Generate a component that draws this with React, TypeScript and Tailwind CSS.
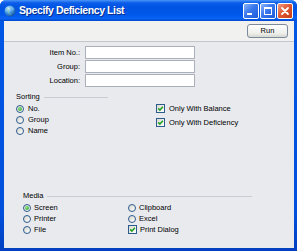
import React from 'react';

// XP-style radio button
function Radio({ checked, label, gap = 'gap-[4px]' }: { checked?: boolean; label: string; gap?: string }) {
  return (
    <div className={`flex h-[11px] items-center ${gap}`}>
      <span className="flex h-[8px] w-[8px] items-center justify-center rounded-full border border-[#2c5b8e] bg-[linear-gradient(135deg,#d6d6ce,#ffffff)]">
        {checked && <span className="h-[4px] w-[4px] rounded-full bg-[radial-gradient(circle_at_35%_35%,#8ee68e,#1c9a1c)]" />}
      </span>
      <span className="leading-[11px]">{label}</span>
    </div>
  );
}

// XP-style checkbox (always ticked here)
function Check({ label, gap = 'gap-[4px]' }: { label: string; gap?: string }) {
  return (
    <div className={`flex items-center ${gap}`}>
      <span className="flex h-[9px] w-[9px] items-center justify-center border border-[#2c5b8e] bg-[linear-gradient(135deg,#d9d9d1,#ffffff)]">
        <svg viewBox="0 0 7 7" className="h-[7px] w-[7px]">
          <path d="M1.2 3.4 L2.9 5.1 L5.9 1.8" stroke="#21a121" strokeWidth="1.5" fill="none" />
        </svg>
      </span>
      <span className="leading-[9px]">{label}</span>
    </div>
  );
}

function Field({ label }: { label: string }) {
  return (
    <div className="flex h-[13px] items-center">
      <span className="w-[77px] pr-[1px] text-right">{label}</span>
      <div className="ml-[4px] h-[13px] w-[110px] border border-[#a9b0ba] bg-white" />
    </div>
  );
}

function GroupHeader({ title, line }: { title: string; line: string }) {
  return (
    <div className="flex h-[8px] items-center gap-[4px] leading-[8px]">
      <span>{title}</span>
      <span className={`h-[1px] ${line} bg-[#c9ccd3]`} />
    </div>
  );
}

function Globe() {
  return (
    <svg viewBox="0 0 12 12" className="h-[12px] w-[12px] shrink-0">
      <defs>
        <radialGradient id="g" cx="35%" cy="30%" r="75%">
          <stop offset="0%" stopColor="#d8f2ff" />
          <stop offset="45%" stopColor="#4fa3e8" />
          <stop offset="100%" stopColor="#134e9c" />
        </radialGradient>
      </defs>
      <circle cx="6" cy="6" r="5.5" fill="url(#g)" />
      <path d="M2.2 4.2 C3.5 3.2 5 4.6 4.4 6 C3.9 7.2 5.2 8.3 6.4 9.6" stroke="#8fd0a8" strokeWidth="1" fill="none" opacity="0.8" />
      <path d="M7.2 2.2 C8.6 3 9.8 4.4 8.4 5.4" stroke="#a8e0ff" strokeWidth="0.9" fill="none" opacity="0.8" />
    </svg>
  );
}

function TitleButton({ kind }: { kind: 'min' | 'max' | 'close' }) {
  const base =
    kind === 'close'
      ? 'bg-[linear-gradient(135deg,#f0a080,#e05a35_45%,#c83c16)]'
      : 'bg-[linear-gradient(135deg,#8cb4fa,#3a78ee_45%,#1f5ad8)]';
  return (
    <div className={`relative h-[16px] w-[16px] rounded-[2px] border border-white ${base}`}>
      {kind === 'min' && <span className="absolute bottom-[3px] left-[3px] h-[2px] w-[5px] bg-white" />}
      {kind === 'max' && (
        <span className="absolute left-[3px] top-[3px] h-[8px] w-[8px] border border-t-2 border-white" />
      )}
      {kind === 'close' && (
        <svg viewBox="0 0 14 14" className="absolute inset-0 h-[14px] w-[14px]">
          <path d="M4 4 L10 10 M10 4 L4 10" stroke="white" strokeWidth="1.8" strokeLinecap="round" />
        </svg>
      )}
    </div>
  );
}

export default function App() {
  return (
    <div className="h-[251px] w-[297px] bg-white font-['Liberation_Sans',Arial,sans-serif] text-[7.5px] text-black">
      <div className="flex h-full flex-col overflow-hidden rounded-t-[6px] bg-[linear-gradient(to_bottom,#0058e6,#0050dc_85%,#003fc0)]">
        {/* Title bar */}
        <div className="flex h-[21px] shrink-0 items-center bg-[linear-gradient(to_bottom,#4a95f8_0%,#0a5ce9_14%,#0054e3_35%,#0058ea_70%,#0a63f4_88%,#0048cc_100%)] pl-[4px] pr-[4px]">
          <Globe />
          <span className="ml-[3px] text-[10.5px] font-bold tracking-[-0.4px] text-white [text-shadow:1px_1px_0_#0a2f8a]">
            Specify Deficiency List
          </span>
          <div className="ml-auto flex gap-[1px]">
            <TitleButton kind="min" />
            <TitleButton kind="max" />
            <TitleButton kind="close" />
          </div>
        </div>

        {/* Client area */}
        <div className="mb-[3px] ml-[4px] mr-[3px] flex flex-1 flex-col">
          <div className="flex h-[21px] items-center justify-end border-b border-[#c3c6cc] bg-[#f1f1ef] pr-[6px]">
            <button className="h-[14px] w-[41px] rounded-[3px] border border-[#7d8a9c] bg-[linear-gradient(to_bottom,#ffffff,#eeeeea_70%,#d8d8d2)] text-center leading-[12px]">
              Run
            </button>
          </div>

          <div className="flex flex-1 flex-col bg-[#e8eaee] pt-[4px]">
            <div className="flex flex-col gap-[1px]">
              <Field label="Item No.:" />
              <Field label="Group:" />
              <Field label="Location:" />
            </div>

            <div className="mt-[6px] flex">
              <div className="ml-[12px] flex w-[140px] flex-col">
                <GroupHeader title="Sorting" line="w-[64px]" />
                <div className="mt-[2px] flex flex-col">
                  <Radio checked label="No." />
                  <Radio label="Group" />
                  <Radio label="Name" />
                </div>
              </div>
              <div className="flex flex-col gap-[5px] pt-[11px]">
                <Check label="Only With Balance" />
                <Check label="Only With Deficiency" />
              </div>
            </div>

            <div className="mt-auto flex flex-col pb-[13px] pl-[19px]">
              <GroupHeader title="Media" line="w-[205px]" />
              <div className="mt-[2px] grid grid-cols-[105px_1fr]">
                <Radio checked label="Screen" gap="gap-[3px]" />
                <Radio label="Clipboard" gap="gap-[3px]" />
                <Radio label="Printer" gap="gap-[3px]" />
                <Radio label="Excel" gap="gap-[3px]" />
                <Radio label="File" gap="gap-[3px]" />
                <div className="flex h-[11px] items-center">
                  <Check label="Print Dialog" gap="gap-[3px]" />
                </div>
              </div>
            </div>
          </div>
        </div>
      </div>
    </div>
  );
}
